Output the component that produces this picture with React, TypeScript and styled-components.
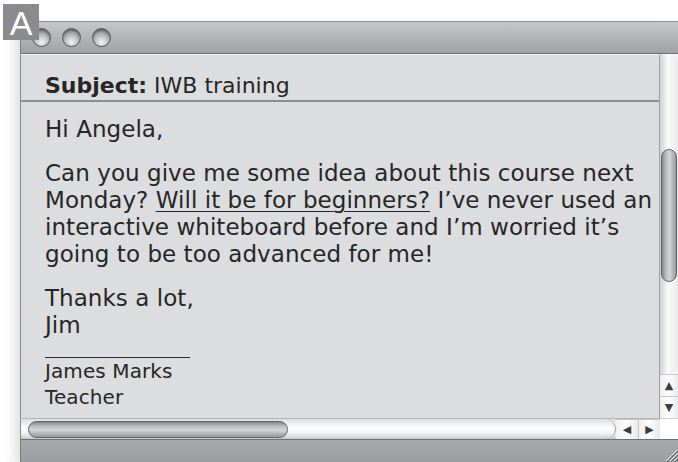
import React from 'react';
import styled, { createGlobalStyle } from 'styled-components';

const GlobalStyle = createGlobalStyle`
    html, body {
        margin: 0;
        padding: 0;
        background: #ffffff;
    }
    body {
        font-family: "DejaVu Sans", "Liberation Sans", sans-serif;
        color: #262626;
    }
`;

const Page = styled.div`
    position: relative;
    width: 678px;
    height: 462px;
    overflow: hidden;
    background: #ffffff;
`;

const Badge = styled.div`
    position: absolute;
    left: 3px;
    top: 4px;
    width: 36px;
    height: 36px;
    background: #8b8b8d;
    color: #ffffff;
    font-family: "Liberation Sans", sans-serif;
    font-size: 34px;
    line-height: 38px;
    text-align: center;
    z-index: 2;
`;

const Window = styled.div`
    position: absolute;
    left: 20px;
    top: 21px;
    width: 658px;
    height: 441px;
    display: flex;
    flex-direction: column;
    box-shadow: -6px 4px 10px rgba(0, 0, 0, 0.12);
`;

const TitleBar = styled.div`
    height: 31px;
    flex: none;
    display: flex;
    align-items: center;
    gap: 11px;
    padding-left: 11px;
    background: linear-gradient(#c6c7cb, #b3b4b8 50%, #a0a1a5);
    border-top: 1px solid #8e8f92;
    border-bottom: 1px solid #6f7073;
    border-left: 1px solid #7b7c7f;
`;

const Light = styled.span`
    width: 19px;
    height: 19px;
    border-radius: 50%;
    box-sizing: border-box;
    border: 1px solid #55565a;
    background: radial-gradient(circle at 50% 78%, #f4f4f5 0%, #b9babd 45%, #75767a 100%);
    box-shadow: inset 0 2px 2px rgba(0, 0, 0, 0.3);
`;

const Middle = styled.div`
    flex: 1;
    display: flex;
    min-height: 0;
`;

const Pane = styled.div`
    flex: 1;
    background: #dcdddf;
    border-left: 1px solid #8a8b8e;
    border-right: 1px solid #a0a1a4;
    border-top: 1px solid #f4f4f5;
    display: flex;
    flex-direction: column;
    white-space: nowrap;
`;

const Subject = styled.div`
    padding: 17px 0 1px 24px;
    font-size: 22px;
    line-height: 27px;
    border-bottom: 2px solid #8c8d90;
    b {
        font-weight: bold;
    }
`;

const Body = styled.div`
    padding: 14px 0 0 24px;
    font-size: 23px;
    letter-spacing: 0.05px;
    line-height: 27px;
`;

const Para = styled.p<{ last?: boolean }>`
    margin: 0 0 ${(p) => (p.last ? 0 : 17)}px 0;
    u {
        text-decoration: underline;
        text-underline-offset: 3px;
        text-decoration-thickness: 1px;
    }
`;

const Signature = styled.div`
    margin-top: 18px;
    width: 145px;
    border-top: 1px solid #2a2a2a;
    font-size: 20px;
    letter-spacing: 0.1px;
    line-height: 26px;
`;

const VScroll = styled.div`
    width: 18px;
    flex: none;
    display: flex;
    flex-direction: column;
    background: linear-gradient(90deg, #d2d3d5, #ffffff 40%, #f3f3f4);
`;

const VTrack = styled.div`
    flex: 1;
    border-radius: 9px;
    background: linear-gradient(90deg, #cfd0d2, #fbfbfb 45%, #e9e9ea);
`;

const VThumb = styled.div`
    margin: 95px 1px 0 1px;
    height: 133px;
    box-sizing: border-box;
    border-radius: 8px;
    border: 1px solid #626366;
    background: linear-gradient(90deg, #86878b, #bfc0c3 30%, #d3d4d6 55%, #96979a);
`;

const ArrowBox = styled.div<{ w?: number; h?: number }>`
    width: ${(p) => (p.w ? `${p.w}px` : '100%')};
    height: ${(p) => (p.h ? `${p.h}px` : '100%')};
    display: flex;
    align-items: center;
    justify-content: center;
    background: linear-gradient(90deg, #f0f0f1, #ffffff 50%, #e9e9ea);
    border-top: 1px solid #c4c5c7;
    box-sizing: border-box;
    color: #3d3d3f;
    font-size: 11px;
    line-height: 1;
`;

const Bottom = styled.div`
    height: 21px;
    flex: none;
    display: flex;
`;

const HScroll = styled.div`
    flex: 1;
    display: flex;
    align-items: center;
    border-left: 1px solid #8a8b8e;
    border-top: 1px solid #b5b6b8;
    background: linear-gradient(#dcdddf, #ffffff 45%, #f4f4f5 70%, #c8c9cb);
`;

const HThumb = styled.div`
    margin-left: 7px;
    width: 260px;
    height: 17px;
    box-sizing: border-box;
    border-radius: 9px;
    border: 1px solid #626366;
    background: linear-gradient(#86878b, #bfc0c3 30%, #d3d4d6 55%, #96979a);
`;

const HTrack = styled.div`
    flex: 1;
    height: 100%;
    border-radius: 0 10px 10px 0;
    border-right: 1px solid #9a9b9e;
`;

const HArrows = styled.div`
    display: flex;
    height: 100%;
    div + div {
        border-left: 1px solid #c4c5c7;
    }
`;

const Corner = styled.div`
    width: 18px;
    flex: none;
    background: #ffffff;
    border-top: 1px solid #d0d1d3;
`;

const StatusBar = styled.div`
    height: 22px;
    flex: none;
    display: flex;
    justify-content: flex-end;
    align-items: flex-end;
    background: linear-gradient(#a8a9ad, #9c9da1);
    border-top: 1px solid #6f7073;
    border-left: 1px solid #7b7c7f;
`;

// resize grip in the bottom-right corner
const Grip = () => (
    <svg width="14" height="14" viewBox="0 0 14 14">
        <path d="M13 2 L2 13 M13 6 L6 13 M13 10 L10 13" stroke="#e6e6e8" strokeWidth="1" />
        <path d="M14 3 L3 14 M14 7 L7 14 M14 11 L11 14" stroke="#6c6d70" strokeWidth="1" />
    </svg>
);

export default function App() {
    return (
        <Page>
            <GlobalStyle />
            <Badge>A</Badge>
            <Window>
                <TitleBar>
                    <Light />
                    <Light />
                    <Light />
                </TitleBar>
                <Middle>
                    <Pane>
                        <Subject>
                            <b>Subject:</b> IWB training
                        </Subject>
                        <Body>
                            <Para>Hi Angela,</Para>
                            <Para>
                                Can you give me some idea about this course next
                                <br />
                                Monday? <u>Will it be for beginners?</u> I’ve never used an
                                <br />
                                interactive whiteboard before and I’m worried it’s
                                <br />
                                going to be too advanced for me!
                            </Para>
                            <Para last>
                                Thanks a lot,
                                <br />
                                Jim
                            </Para>
                            <Signature>
                                James Marks
                                <br />
                                Teacher
                            </Signature>
                        </Body>
                    </Pane>
                    <VScroll>
                        <VTrack>
                            <VThumb />
                        </VTrack>
                        <ArrowBox h={22}>▲</ArrowBox>
                        <ArrowBox h={22}>▼</ArrowBox>
                    </VScroll>
                </Middle>
                <Bottom>
                    <HScroll>
                        <HThumb />
                        <HTrack />
                        <HArrows>
                            <ArrowBox w={22}>◀</ArrowBox>
                            <ArrowBox w={22}>▶</ArrowBox>
                        </HArrows>
                    </HScroll>
                    <Corner />
                </Bottom>
                <StatusBar>
                    <Grip />
                </StatusBar>
            </Window>
        </Page>
    );
}
